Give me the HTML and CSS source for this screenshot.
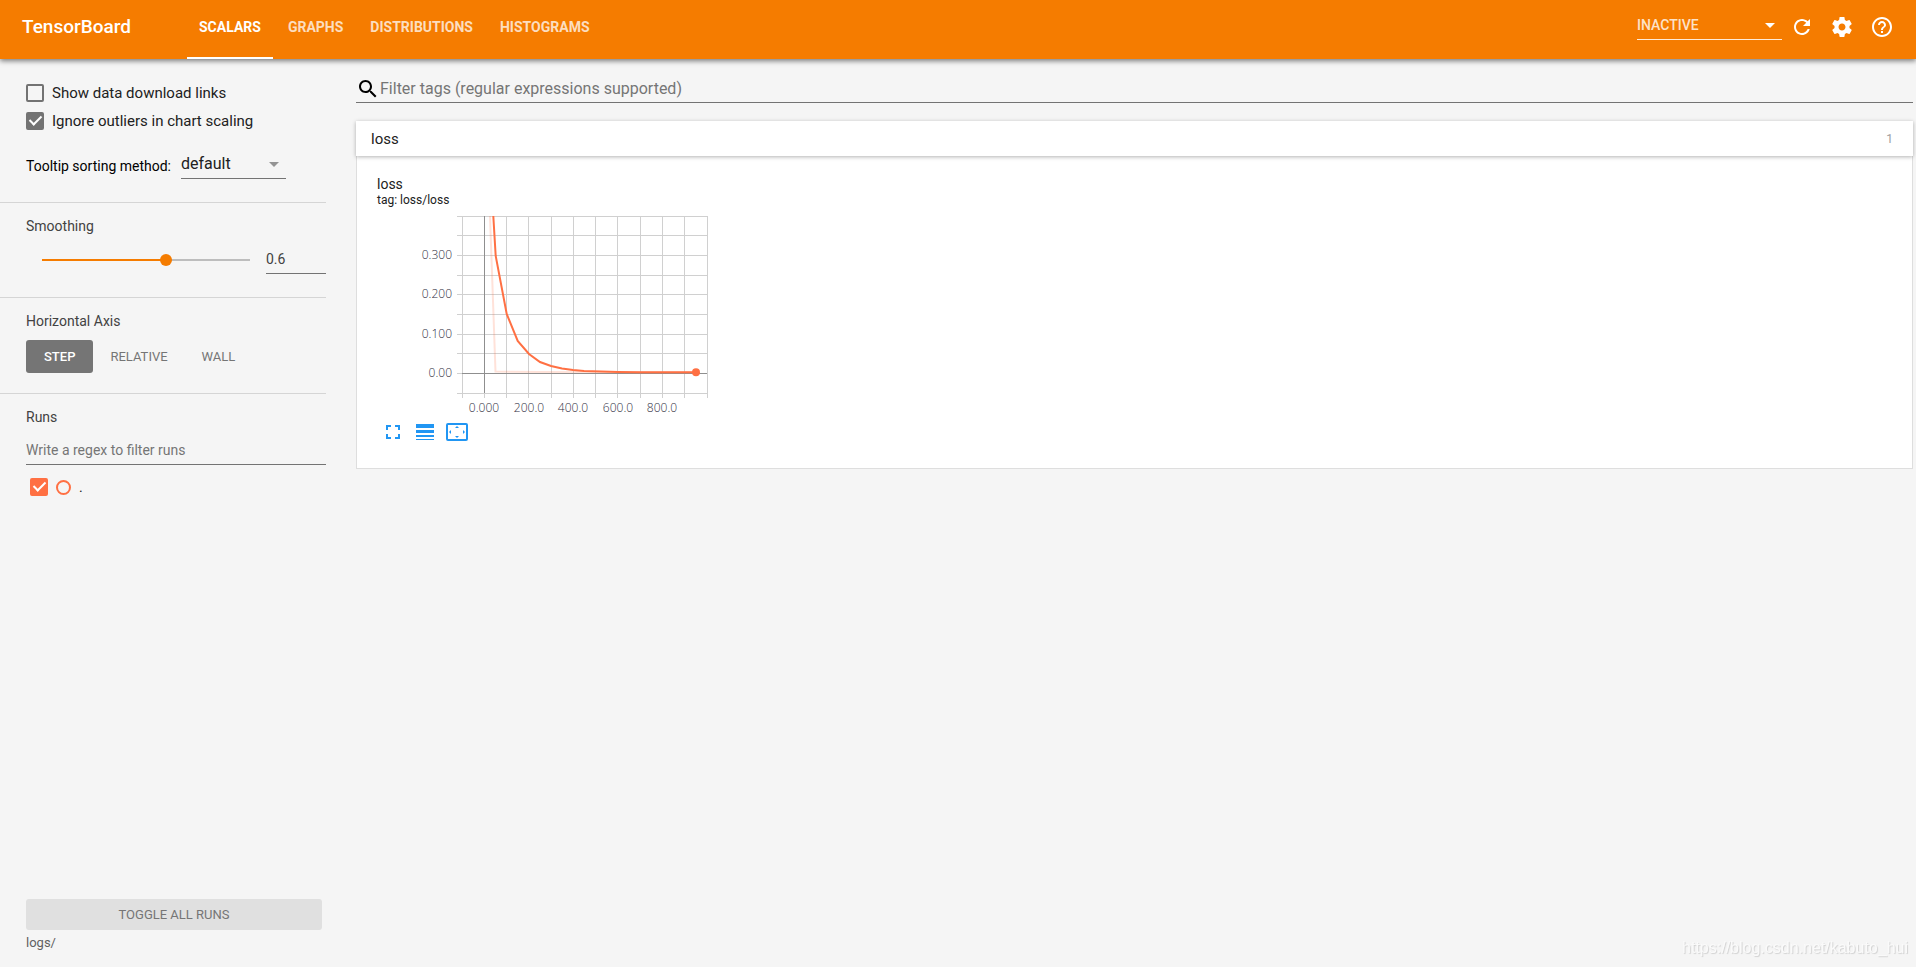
FILE: index.html
```html
<!DOCTYPE html>
<html lang="en">
<head>
<meta charset="utf-8">
<title>TensorBoard</title>
<link rel="stylesheet" href="styles.css">
</head>
<body>
<header class="toolbar">
  <h1 class="brand">TensorBoard</h1>
  <nav class="tabs">
    <a class="tab active" href="#scalars">SCALARS</a>
    <a class="tab" href="#graphs">GRAPHS</a>
    <a class="tab" href="#distributions">DISTRIBUTIONS</a>
    <a class="tab" href="#histograms">HISTOGRAMS</a>
  </nav>
  <div class="actions">
    <div class="picker inactive-picker">
      <select class="picker-select" aria-label="Inactive dashboards"><option>INACTIVE</option></select>
      <svg class="caret" viewBox="0 0 10 5"><path d="M0 0h10L5 5z"/></svg>
    </div>
    <button class="icon-button" aria-label="Reload"><svg viewBox="0 0 24 24"><path d="M17.65 6.35C16.2 4.9 14.21 4 12 4c-4.42 0-7.99 3.58-7.99 8s3.57 8 7.99 8c3.73 0 6.84-2.55 7.73-6h-2.08c-.82 2.33-3.04 4-5.65 4-3.31 0-6-2.69-6-6s2.69-6 6-6c1.66 0 3.14.69 4.22 1.78L13 11h7V4l-2.35 2.35z"/></svg></button>
    <button class="icon-button" aria-label="Settings"><svg viewBox="0 0 24 24"><path d="M19.43 12.98c.04-.32.07-.64.07-.98s-.03-.66-.07-.98l2.11-1.65c.19-.15.24-.42.12-.64l-2-3.46c-.12-.22-.39-.3-.61-.22l-2.49 1c-.52-.4-1.08-.73-1.69-.98l-.38-2.65C14.46 2.18 14.25 2 14 2h-4c-.25 0-.46.18-.49.42l-.38 2.65c-.61.25-1.17.59-1.69.98l-2.49-1c-.23-.09-.49 0-.61.22l-2 3.46c-.13.22-.07.49.12.64l2.11 1.65c-.04.32-.07.65-.07.98s.03.66.07.98l-2.11 1.65c-.19.15-.24.42-.12.64l2 3.46c.12.22.39.3.61.22l2.49-1c.52.4 1.08.73 1.69.98l.38 2.65c.03.24.24.42.49.42h4c.25 0 .46-.18.49-.42l.38-2.65c.61-.25 1.17-.59 1.69-.98l2.49 1c.23.09.49 0 .61-.22l2-3.46c.12-.22.07-.49-.12-.64l-2.11-1.65zM12 15.5c-1.93 0-3.5-1.57-3.5-3.5s1.57-3.5 3.5-3.5 3.5 1.57 3.5 3.5-1.57 3.5-3.5 3.5z"/></svg></button>
    <button class="icon-button" aria-label="Help"><svg viewBox="0 0 24 24"><path d="M11 18h2v-2h-2v2zm1-16C6.48 2 2 6.48 2 12s4.48 10 10 10 10-4.48 10-10S17.52 2 12 2zm0 18c-4.41 0-8-3.59-8-8s3.59-8 8-8 8 3.59 8 8-3.59 8-8 8zm0-14c-2.21 0-4 1.79-4 4h2c0-1.1.9-2 2-2s2 .9 2 2c0 2-3 1.75-3 5h2c0-2.25 3-2.5 3-5 0-2.21-1.79-4-4-4z"/></svg></button>
  </div>
</header>

<div class="dashboard">
  <aside class="sidebar">
    <section class="panel options">
      <label class="check-row"><input class="checkbox" type="checkbox">Show data download links</label>
      <label class="check-row"><input class="checkbox" type="checkbox" checked>Ignore outliers in chart scaling</label>
      <div class="tooltip-row">
        <label for="sorting">Tooltip sorting method:</label>
        <div class="picker sorting-picker">
          <select id="sorting" class="picker-select"><option>default</option></select>
          <svg class="caret" viewBox="0 0 10 5"><path d="M0 0h10L5 5z"/></svg>
        </div>
      </div>
    </section>
    <section class="panel smoothing">
      <h2 class="panel-title" id="smoothing">Smoothing</h2>
      <div class="smoothing-row">
        <input class="slider" type="range" min="0" max="1" step="0.001" value="0.6" aria-labelledby="smoothing">
        <input class="smoothing-value" type="number" value="0.6" step="0.001" aria-labelledby="smoothing">
      </div>
    </section>
    <section class="panel axis">
      <h2 class="panel-title">Horizontal Axis</h2>
      <div class="axis-row">
        <button class="axis-button selected">STEP</button>
        <button class="axis-button">RELATIVE</button>
        <button class="axis-button">WALL</button>
      </div>
    </section>
    <section class="panel runs">
      <h2 class="panel-title">Runs</h2>
      <input class="run-filter" type="text" placeholder="Write a regex to filter runs" aria-label="Write a regex to filter runs">
      <div class="run-row">
        <input class="checkbox run-checkbox" id="run" type="checkbox" checked>
        <button class="run-isolate" aria-label="Show only this run"></button>
        <label for="run">.</label>
      </div>
      <button class="toggle-all">TOGGLE ALL RUNS</button>
      <div class="logdir">logs/</div>
    </section>
  </aside>

  <main class="center">
    <label class="tag-filter">
      <svg class="search-icon" viewBox="0 0 24 24"><path d="M15.5 14h-.79l-.28-.27C15.41 12.59 16 11.11 16 9.5 16 5.91 13.09 3 9.5 3S3 5.91 3 9.5 5.91 16 9.5 16c1.61 0 3.09-.59 4.23-1.57l.27.28v.79l5 4.99L20.49 19l-4.99-5zm-6 0C7.01 14 5 11.99 5 9.5S7.01 5 9.5 5 14 7.01 14 9.5 11.99 14 9.5 14z"/></svg>
      <input class="tag-input" type="text" placeholder="Filter tags (regular expressions supported)" aria-label="Filter tags">
    </label>
    <section class="category">
      <button class="category-header"><span>loss</span><span class="count">1</span></button>
      <div class="category-body">
        <article class="chart-card">
          <h3 class="chart-title">loss</h3>
          <div class="chart-tag">tag: loss/loss</div>
          <svg class="chart" width="345" height="208" viewBox="377 210 345 208" role="img" aria-label="Loss by step">
            <g class="grid">
              <path d="M462.5 217v182M506.5 217v182M528.5 217v182M551.5 217v182M573.5 217v182M595.5 217v182M617.5 217v182M640.5 217v182M662.5 217v182M684.5 217v182M707.5 217v182"/>
              <path d="M457 217.5h250M457 236.5h250M457 256.5h250M457 276.5h250M457 295.5h250M457 315.5h250M457 335.5h250M457 354.5h250M457 394.5h250"/>
              <path d="M457 374.5h5M484.5 394v5"/>
            </g>
            <path class="axis-line" d="M484.5 217v177M462 374.5h245"/>
            <path class="raw-line" d="M490 217L495.5 372.5L540 373L696 373.5"/>
            <path class="smooth-line" d="M493.3 217L495.7 257L506.7 315L517.7 342L529 355L540 363L551 367L562 369.5L573 371L584 372L618 373L640 373.3H696"/>
            <circle class="last-point" cx="696" cy="373.3" r="4"/>
            <g class="y-labels">
              <text x="452" y="260">0.300</text><text x="452" y="299">0.200</text><text x="452" y="339">0.100</text><text x="452" y="378">0.00</text>
            </g>
            <g class="x-labels">
              <text x="484" y="413">0.000</text><text x="529" y="413">200.0</text><text x="573" y="413">400.0</text><text x="618" y="413">600.0</text><text x="662" y="413">800.0</text>
            </g>
          </svg>
          <div class="chart-actions">
            <button class="chart-button" aria-label="Toggle full size"><svg width="14" height="14" viewBox="0 0 14 14"><path d="M0 0h5v2H2v3H0zM9 0h5v5h-2V2H9zM0 9h2v3h3v2H0zM12 9h2v5H9v-2h3z"/></svg></button>
            <button class="chart-button" aria-label="Toggle log scale"><svg width="18" height="16" viewBox="0 0 18 16"><path d="M0 0h18v4H0zM0 6h18v3H0zM0 11h18v2H0zM0 15h18v1H0z"/></svg></button>
            <button class="chart-button" aria-label="Fit domain to data"><svg width="22" height="18" viewBox="0 0 22 18"><path fill-rule="evenodd" d="M2 0h18a2 2 0 0 1 2 2v14a2 2 0 0 1-2 2H2a2 2 0 0 1-2-2V2a2 2 0 0 1 2-2zM2 2v14h18V2zM11 3l2 2H9zM11 15l2-2H9zM3 9l2-2v4zM19 9l-2-2v4z"/></svg></button>
          </div>
        </article>
      </div>
    </section>
  </main>
</div>
<div class="watermark">https://blog.csdn.net/kabuto_hui</div>
</body>
</html>
```
FILE: styles.css
```css
* {
  box-sizing: border-box;
}

body {
  margin: 0;
  height: 100vh;
  display: flex;
  flex-direction: column;
  background: #f5f5f5;
  color: #212121;
  font: 14px/20px Roboto, "Noto Sans", sans-serif;
}

button,
input,
select {
  margin: 0;
  padding: 0;
  border: 0;
  border-radius: 0;
  outline: 0;
  background: none;
  color: inherit;
  font: inherit;
}

h1,
h2,
h3 {
  margin: 0;
  font-weight: 400;
}

/* Toolbar */
.toolbar {
  position: relative;
  flex: none;
  display: flex;
  height: 59px;
  padding: 0 22px;
  background: #f57c00;
  color: #fff;
  box-shadow: 0 2px 5px rgba(0, 0, 0, 0.5);
}

.brand {
  width: 165px;
  padding-top: 15px;
  font-size: 19px;
  line-height: 24px;
  font-weight: 500;
}

.tabs {
  display: flex;
  gap: 3px;
}

.tab {
  padding: 17px 12px 0;
  border-bottom: 2px solid transparent;
  color: rgba(255, 255, 255, 0.75);
  font-size: 14px;
  font-weight: 700;
  text-decoration: none;
}

.tab.active {
  border-color: #fff;
  color: #fff;
}

.actions {
  display: flex;
  align-items: flex-start;
  margin-left: auto;
}

.picker {
  display: grid;
  align-items: center;
  border-bottom: 1px solid #737373;
}

.picker > * {
  grid-area: 1 / 1;
}

.picker-select {
  width: 100%;
  appearance: none;
}

.caret {
  width: 10px;
  height: 5px;
  margin-right: 7px;
  justify-self: end;
  fill: #949494;
  pointer-events: none;
}

.inactive-picker {
  width: 145px;
  height: 25px;
  margin: 15px 8px 0 0;
  padding-bottom: 4px;
  border-color: rgba(255, 255, 255, 0.85);
  color: rgba(255, 255, 255, 0.8);
  font-size: 14px;
  font-weight: 500;
}

.inactive-picker .caret {
  fill: #fff;
}

.icon-button {
  width: 24px;
  height: 24px;
  margin-top: 15px;
}

.icon-button + .icon-button {
  margin-left: 16px;
}

.icon-button svg {
  display: block;
  fill: #fff;
}

/* Sidebar */
.dashboard {
  flex: 1;
  display: flex;
  gap: 30px;
  min-height: 0;
  padding-right: 3px;
}

.sidebar {
  flex: none;
  display: flex;
  flex-direction: column;
  width: 326px;
}

.panel {
  padding: 13px 0 23px 26px;
  border-bottom: 1px solid #d5d5d5;
}

.panel-title {
  color: #424242;
  font-size: 14px;
  line-height: 20px;
}

.options {
  padding-top: 24px;
}

.check-row {
  display: flex;
  align-items: center;
  gap: 8px;
  margin-bottom: 8px;
  font-size: 15px;
}

.checkbox {
  display: grid;
  flex: none;
  justify-content: center;
  align-content: start;
  width: 18px;
  height: 18px;
  border: 2px solid #737373;
  border-radius: 2px;
  appearance: none;
}

.checkbox:checked {
  background: #737373;
}

.checkbox:checked::after {
  content: "";
  width: 5px;
  height: 10px;
  margin-top: -1px;
  border: solid #fff;
  border-width: 0 2px 2px 0;
  transform: rotate(45deg);
}

.tooltip-row {
  display: flex;
  align-items: flex-end;
  gap: 10px;
  margin-top: 23px;
  color: #000;
}

.tooltip-row label {
  padding-bottom: 3px;
}

.sorting-picker {
  width: 105px;
  padding-bottom: 4px;
  color: #212121;
  font-size: 16px;
}

.smoothing-row {
  display: flex;
  align-items: center;
  gap: 16px;
  margin-top: 10px;
  padding-left: 16px;
}

.slider {
  width: 208px;
  height: 12px;
  appearance: none;
}

.slider::-webkit-slider-runnable-track {
  height: 2px;
  background: linear-gradient(to right, #f57c00 60%, #bdbdbd 60%);
}

.slider::-webkit-slider-thumb {
  width: 12px;
  height: 12px;
  margin-top: -5px;
  border-radius: 50%;
  background: #f57c00;
  appearance: none;
}

.smoothing-value {
  width: 60px;
  height: 28px;
  padding-bottom: 1px;
  border-bottom: 1px solid #737373;
  color: #424242;
  appearance: textfield;
}

.smoothing-value::-webkit-inner-spin-button {
  display: none;
}

.axis-row {
  display: flex;
  margin-top: 9px;
}

.axis-button {
  height: 33px;
  padding: 0 17px;
  border-radius: 3px;
  color: #757575;
  font-size: 13px;
}

.axis-button.selected {
  padding: 0 18px;
  background: #757575;
  color: #fff;
  font-weight: 500;
}

.axis {
  padding-bottom: 20px;
}

.runs {
  flex: 1;
  display: flex;
  flex-direction: column;
  padding-bottom: 14px;
  border-bottom: 0;
}

.run-filter {
  height: 30px;
  margin-top: 8px;
  padding-top: 1px;
  border-bottom: 1px solid #737373;
}

.run-filter::placeholder,
.tag-input::placeholder {
  color: #757575;
  opacity: 1;
}

.run-row {
  display: flex;
  align-items: center;
  gap: 8px;
  margin: 12px 0 auto;
  padding-left: 4px;
}

.run-row .checkbox {
  border-color: #ff7043;
  background: #ff7043;
}

.run-isolate {
  width: 15px;
  height: 15px;
  border: 2px solid #ff7043;
  border-radius: 50%;
}

.toggle-all {
  height: 31px;
  margin-right: 4px;
  border-radius: 3px;
  background: #e0e0e0;
  color: #757575;
  font-size: 13px;
}

.logdir {
  margin-top: 3px;
  color: #616161;
  font-size: 13px;
}

/* Charts */
.center {
  flex: 1;
  min-width: 0;
}

.tag-filter {
  display: flex;
  align-items: center;
  height: 44px;
  padding-top: 16px;
  border-bottom: 1px solid #737373;
}

.search-icon {
  flex: none;
  width: 24px;
  height: 24px;
  fill: #000;
}

.tag-input {
  flex: 1;
  font-size: 16px;
}

.category {
  margin-top: 18px;
}

.category-header {
  position: relative;
  display: flex;
  align-items: center;
  justify-content: space-between;
  width: 100%;
  height: 35px;
  padding: 0 20px 0 15px;
  background: #fff;
  font-size: 15px;
  box-shadow: 0 1px 4px rgba(0, 0, 0, 0.3);
}

.count {
  color: #9e9e9e;
  font-size: 12px;
}

.category-body {
  padding: 18px 20px 21px;
  border: 1px solid #dedede;
  border-top: 0;
  background: #fff;
}

.chart-title {
  font-size: 14px;
  line-height: 20px;
}

.chart-tag {
  font-size: 12px;
  line-height: 12px;
}

.chart {
  display: block;
  margin-top: 3px;
}

.grid {
  fill: none;
  stroke: #d0d0d0;
}

.axis-line {
  fill: none;
  stroke: #8f8f8f;
}

.raw-line,
.smooth-line {
  fill: none;
  stroke: #ff7043;
  stroke-width: 2;
}

.raw-line {
  opacity: 0.2;
}

.last-point {
  fill: #ff7043;
}

.y-labels,
.x-labels {
  fill: #32313f;
  font: 300 12px "Open Sans", "Noto Sans", sans-serif;
}

.y-labels {
  text-anchor: end;
}

.x-labels {
  text-anchor: middle;
}

.chart-actions {
  display: flex;
  align-items: center;
  gap: 2px;
  height: 30px;
  padding-left: 1px;
}

.chart-button {
  display: flex;
  align-items: center;
  justify-content: center;
  width: 30px;
  height: 30px;
}

.chart-button svg {
  fill: #2196f3;
}

.watermark {
  position: fixed;
  right: 8px;
  bottom: 9px;
  color: #fafafa;
  font: 16px/20px "Liberation Sans", Arial, sans-serif;
  text-shadow: 1px 1px 1px rgba(0, 0, 0, 0.15);
}
```
